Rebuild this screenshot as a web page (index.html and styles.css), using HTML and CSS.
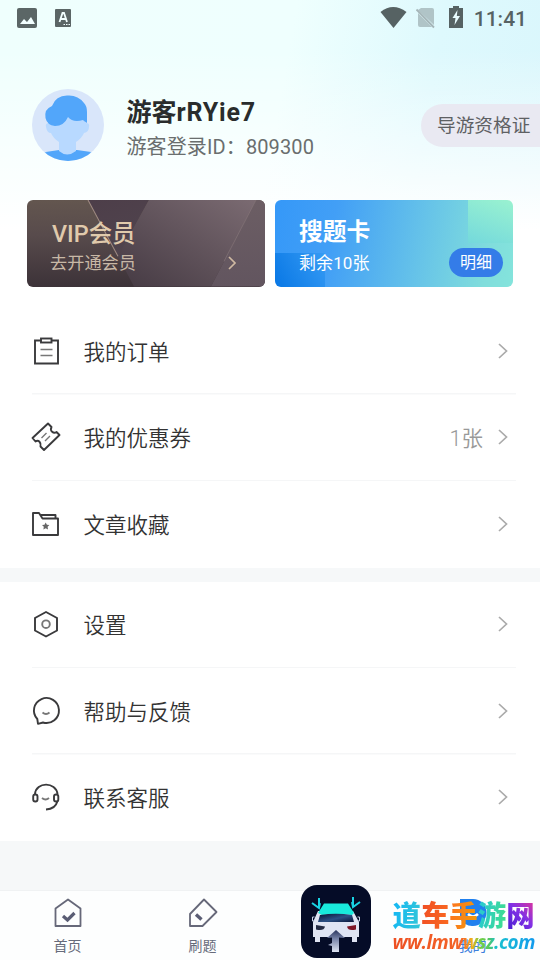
FILE: index.html
```html
<!DOCTYPE html>
<html lang="zh-CN">
<head>
<meta charset="utf-8">
<title>我的</title>
<link rel="stylesheet" href="styles.css">
</head>
<body>
<div class="screen">
  <header class="hero">
    <div class="status">
      <svg width="60" height="24" viewBox="0 0 60 24">
        <rect x="0" y="1" width="20" height="20" rx="2" fill="#5b6666"/>
        <path d="M3 17l4-5 3 3 4-5 4 7z" fill="#f2ffff"/>
        <rect x="38" y="2" width="16" height="18" rx="1" fill="#5b6666"/>
        <path d="M42.500 15l3-9h1.500l3 9M43.500 12h5" fill="none" stroke="#f2ffff" stroke-width="1.800"/>
        <path d="M46.500 17.500h1.500M49 17.500h1.500M51.500 17.500h1.500" stroke="#f2ffff" stroke-width="1.200"/>
      </svg>
      <div class="status-right">
        <svg width="84" height="24" viewBox="0 0 84 24">
          <path d="M0.500 5Q13 -5 26.500 5L13.500 21z" fill="#566263"/>
          <path d="M41 1h11q2 0 2 2v15L38 3zM38 6l14 14H40q-2 0-2-2z" fill="#b0c4c7"/>
          <path d="M36.500 2.500l17.500 18" stroke="#a5b5b8" stroke-width="1.800"/>
          <path d="M69 1h4V-1h6v2h4v20H69z" fill="#566263"/>
          <path d="M77.500 3l-5 8h3l-1 7 5.500-9h-3.200z" fill="#e9fcff"/>
        </svg>
        <span class="clock">11:41</span>
      </div>
    </div>
    <div class="profile">
      <svg class="avatar" viewBox="0 0 72 72">
        <defs><clipPath id="disc"><circle cx="36" cy="36" r="36"/></clipPath></defs>
        <g clip-path="url(#disc)">
          <rect width="72" height="72" fill="#d9e6fa"/>
          <path d="M10 64q9-2 17-3h18q9 1 17 3v10H10z" fill="#52a6fa"/>
          <path d="M17 34q-4 0-3 4 1 6 5 6 2 5 8 9v9q8 7 17 0v-9q6-4 8-9 5-1 5-6 1-4-3-4L50 25H19z" fill="#b8d9ff"/>
          <path d="M13.500 29Q12 20 20 17 24 6 36 6.500 46 6 52 14q3 3 3 9v11l-3-2-1-1q-10 3-15-3-4 9-13 9-8-1-9.500-8z" fill="#52a6fa"/>
        </g>
      </svg>
      <div class="who">
        <div class="name">游客<span class="latin">rRYie7</span></div>
        <div class="uid">游客登录ID：809300</div>
      </div>
      <div class="cert">导游资格证</div>
    </div>
    <div class="cards">
      <section class="card vip">
        <svg class="facets" viewBox="0 0 238 86" preserveAspectRatio="none">
          <defs>
            <linearGradient id="f1" x1="0" y1="0" x2=".4" y2="1"><stop stop-color="#4d3e49"/><stop offset="1" stop-color="#50444e"/></linearGradient>
            <linearGradient id="f2" x1="1" y1="0" x2="0" y2="1"><stop stop-color="#7b6b72"/><stop offset="1" stop-color="#453a43"/></linearGradient>
            <linearGradient id="f3" x1="0" y1="0" x2="0" y2="1"><stop stop-color="#6c5e64"/><stop offset="1" stop-color="#62555f"/></linearGradient>
          </defs>
          <path d="M61 0h61L91 56z" fill="url(#f1)"/>
          <path d="M122 0h107l-45 86H107L91 56z" fill="url(#f2)"/>
          <path d="M229 0h9v86h-54z" fill="url(#f3)"/>
          <path d="M61 0l30 56" stroke="#a18c83" fill="none"/>
          <path d="M229 0l-32 61" stroke="#86777b" stroke-width=".7" fill="none"/>
        </svg>
        <div class="card-body">
          <div class="vip-title">VIP会员</div>
          <div class="vip-sub">去开通会员</div>
        </div>
        <svg class="vip-arrow" viewBox="0 0 8 14"><path d="M1 1l6 6-6 6" fill="none" stroke="#cfb9a2" stroke-width="1.700"/></svg>
      </section>
      <section class="card search">
        <div class="card-body">
          <div class="search-title">搜题卡</div>
          <div class="search-sub">剩余10张</div>
        </div>
        <div class="detail">明细</div>
      </section>
    </div>
  </header>

  <main>
    <div class="group first">
      <div class="row">
        <svg class="icon" viewBox="0 0 30 30"><g fill="none" stroke="#3a3a3c" stroke-width="1.900"><path d="M10 4.500H4v23h23v-23h-6"/><rect x="10" y="2.500" width="10.500" height="4"/><path d="M9.500 13.500h12M9.500 19.500h12" stroke="#777" stroke-width="1.400"/></g></svg>
        <span class="label">我的订单</span>
        <svg class="arrow" viewBox="0 0 10 16"><path d="M1 1l7.500 7L1 15"/></svg>
      </div>
      <div class="row">
        <svg class="icon" viewBox="0 0 30 30"><g fill="none" stroke="#3a3a3c" stroke-width="1.900" stroke-linejoin="round"><path d="M1.500 16L17 1.500l3.500 3.500c-2 4 2 7 5 5l3 3L13 28l-3.500-3.500c1-4-2-7-5-5z"/><path d="M10.500 16l5-5M14 19l5-5" stroke="#777" stroke-width="1.400"/></g></svg>
        <span class="label">我的优惠券</span>
        <span class="count">1张</span>
        <svg class="arrow" viewBox="0 0 10 16"><path d="M1 1l7.500 7L1 15"/></svg>
      </div>
      <div class="row">
        <svg class="icon" viewBox="0 0 30 30"><g fill="none" stroke="#3a3a3c" stroke-width="1.900" stroke-linejoin="round"><path d="M2 4h6l3.500 5.500H27V26H2zM10 6h14.500v3.500"/></g><path d="M14.700 13.500l1.200 2.200 2.500.3-1.800 1.800.4 2.600-2.300-1.200-2.300 1.200.4-2.600-1.800-1.800 2.500-.3z" fill="#666"/></svg>
        <span class="label">文章收藏</span>
        <svg class="arrow" viewBox="0 0 10 16"><path d="M1 1l7.500 7L1 15"/></svg>
      </div>
    </div>
    <div class="group">
      <div class="row">
        <svg class="icon" viewBox="0 0 30 30"><g fill="none" stroke="#3a3a3c" stroke-width="1.900"><path d="M15 3l11 6v12.500l-11 6-11-6V9z"/><circle cx="15" cy="15.200" r="3.800" stroke="#777"/></g></svg>
        <span class="label">设置</span>
        <svg class="arrow" viewBox="0 0 10 16"><path d="M1 1l7.500 7L1 15"/></svg>
      </div>
      <div class="row">
        <svg class="icon" viewBox="0 0 30 30"><g fill="none" stroke="#3a3a3c" stroke-width="1.900" stroke-linejoin="round"><path d="M7 27.800L6.300 23A12.500 12.500 0 1 1 12 26.500z"/><path d="M11.500 16.500q3.500 3 7 0" stroke="#777"/></g></svg>
        <span class="label">帮助与反馈</span>
        <svg class="arrow" viewBox="0 0 10 16"><path d="M1 1l7.500 7L1 15"/></svg>
      </div>
      <div class="row">
        <svg class="icon" viewBox="0 0 30 30"><g fill="none" stroke="#3a3a3c" stroke-width="1.900"><path d="M4 12C5 -.500 25 -.500 26.500 12M26.500 19q-2 8-11.500 8.500"/><rect x="2.200" y="12.500" width="4.300" height="7" rx="2"/><rect x="23" y="12.500" width="4.300" height="7" rx="2"/><path d="M11 16q3.500 3 7 0" stroke="#777"/></g></svg>
        <span class="label">联系客服</span>
        <svg class="arrow" viewBox="0 0 10 16"><path d="M1 1l7.500 7L1 15"/></svg>
      </div>
    </div>
  </main>

  <nav class="tabs">
    <div class="tab">
      <svg viewBox="0 0 30 30"><path d="M15 1.500l12.500 9V28H2.500V10.500z" fill="none" stroke="#666879" stroke-width="1.800" stroke-linejoin="round"/><path d="M10 18l4.500 4 7-7" fill="none" stroke="#5a5d74" stroke-width="3.200"/></svg>
      <span>首页</span>
    </div>
    <div class="tab">
      <svg viewBox="0 0 30 30"><path d="M16 1.500L28.500 14 14.500 28H2V16z" fill="none" stroke="#666879" stroke-width="1.800" stroke-linejoin="round"/><path d="M8 16.500l5.500 5" fill="none" stroke="#5a5d74" stroke-width="3.400"/></svg>
      <span>刷题</span>
    </div>
    <div class="tab"></div>
    <div class="tab active">
      <svg viewBox="0 0 30 30"><path d="M2 1h13a13 13 0 0 1 0 27A13 13 0 0 1 2 20z" fill="#2080ee"/><path d="M10 16q5 5 10 0" fill="none" stroke="#fff" stroke-width="2.500"/></svg>
      <span>我的</span>
    </div>
  </nav>

  <div class="watermark">
    <svg class="wm-logo" viewBox="0 0 70 73">
      <defs>
        <linearGradient id="glass" x2="1" y2="1"><stop stop-color="#071230"/><stop offset=".55" stop-color="#2b4f84"/><stop offset="1" stop-color="#0a1538"/></linearGradient>
        <linearGradient id="jack" x1="0" y1="0" x2="0" y2="1"><stop stop-color="#27325c"/><stop offset=".4" stop-color="#7783a8"/><stop offset="1" stop-color="#dfe5f4"/></linearGradient>
      </defs>
      <rect width="70" height="73" rx="16" fill="#050c27"/>
      <path d="M17 26h35l6 11v15h-2v5h-5v-5H19v5h-5v-5h-2V37z" fill="#dfe4f3"/>
      <path d="M23 18.500h24l6 9.500-2 2q-16-2-30 0l-4-2z" fill="#19eadc"/>
      <path d="M19 30q16-2.500 32 0l2 7H17z" fill="url(#glass)"/>
      <path d="M13.500 32h-2v4h2M56.500 32h2v4h-2" stroke="#cbd4ea" fill="none"/>
      <path d="M15 40l9 1.500q-1 5-9 3z" fill="#242b44"/><path d="M55 40l-9 1.500q1 5 9 3z" fill="#7e1627"/>
      <path d="M35 45l9 8-6-.5V67h-7v-6l-4-1 4-2v-5.500l-5 .5z" fill="url(#jack)"/>
      <path d="M18 13v10M11 18l7 5 1-5M52 12v10M59 17l-7 5-1-5" stroke="#19d3e4" stroke-width="2" fill="none"/>
    </svg>
    <div class="wm-text">
      <div class="wm-name"><span class="c1">道</span><span class="c2">车</span><span class="c3">手</span><span class="c4">游</span><span class="c5">网</span></div>
      <div class="wm-url">ww.lmwwsz.com</div>
    </div>
  </div>
</div>
</body>
</html>
```
FILE: styles.css
```css
* { box-sizing: border-box; }
body { margin: 0; font-family: Roboto, "Noto Sans CJK SC", sans-serif; color: #333; }
svg { display: block; flex: none; overflow: visible; }
.screen { position: relative; width: 540px; height: 960px; overflow: hidden; display: flex; flex-direction: column; background: #f6f8f9; }

.hero {
  height: 308px; flex: none;
  background:
    linear-gradient(180deg, rgba(255,255,255,0) 50px, #fff 230px),
    linear-gradient(100deg, #effffd 0, #effffe 50%, #def9fd 75%, #d9f6fc 100%);
}
.status { height: 36px; padding: 7px 13px 0 17px; display: flex; justify-content: space-between; }
.status-right { display: flex; gap: 10px; }
.clock { font-size: 21px; line-height: 24px; font-weight: 500; color: #566263; }
.profile { display: flex; padding: 53px 0 0 32px; height: 164px; }
.avatar { width: 72px; height: 72px; }
.who { margin-left: 22.500px; flex: 1; white-space: nowrap; }
.name { font-size: 25px; font-weight: 700; line-height: 36px; margin-top: 6px; color: #292c2c; }
.latin { letter-spacing: .8px; }
.uid { font-size: 20px; line-height: 30px; margin-top: 1px; color: #6a6e6e; letter-spacing: .12px; }
.cert { width: 119px; height: 43px; margin-top: 15px; padding: 1px 0 0 16px; border-radius: 22px 0 0 22px; background: #e9e9f2; color: #5e6063; font-size: 18.700px; line-height: 43px; white-space: nowrap; }

.cards { display: flex; gap: 10px; padding: 0 27px; }
.card { position: relative; width: 238px; height: 86.500px; border-radius: 6px; overflow: hidden; }
.vip { background: linear-gradient(180deg, #63564f 0, #584b4c 40%, #3c3238 100%); }
.facets { position: absolute; inset: 0; width: 100%; height: 100%; }
.card-body { position: relative; padding: 18px 0 0 23px; }
.vip-title { font-size: 23.400px; line-height: 32px; font-weight: 500; color: #e0caac; padding-left: 2px; }
.vip-sub { font-size: 17.200px; line-height: 26px; color: #c8b8a6; }
.vip-arrow { position: absolute; right: 29px; top: 56px; width: 8px; height: 14px; }
.search {
  background:
    linear-gradient(20deg, #74d9dc, #9af2d0) 193px 0 / 45px 43px no-repeat,
    linear-gradient(60deg, #0877e5, #369bf4) 0 53px / 50px 34px no-repeat,
    linear-gradient(100deg, #3598f8 0, #429ff6 25%, #65c2e9 60%, #80dddc 88%, #84e4dc 100%);
}
.search .card-body { padding: 17px 0 0 24px; }
.search-title { font-size: 23.800px; line-height: 30px; font-weight: 700; color: #fff; }
.search-sub { font-size: 17px; line-height: 26px; margin-top: 3px; color: #fff; letter-spacing: .1px; }
.detail { position: absolute; right: 10px; bottom: 9.500px; width: 54px; height: 29px; border-radius: 15px; background: #347ce8; color: #fff; font-size: 16px; line-height: 29px; text-align: center; }

.group { background: #fff; margin-bottom: 14px; }
.row { height: 86.500px; padding: 0 32.500px 1px 31px; display: flex; align-items: center; background: linear-gradient(#f5f6f7, #f5f6f7) 32px 100% / 484px 1.500px no-repeat; }
.row:last-child { background: none; }
.icon { width: 30px; height: 30px; margin-right: 22.500px; }
.label { flex: 1; font-size: 21.500px; line-height: 32px; padding-top: 4px; color: #333; font-weight: 350; }
.count { font-size: 21.500px; line-height: 32px; color: #999; margin-right: 14.500px; padding-top: 4px; font-weight: 350; }
.arrow { width: 10px; height: 16px; fill: none; stroke: #aaa; stroke-width: 1.700; }

.tabs { position: absolute; left: 0; right: 0; bottom: 0; height: 70px; display: flex; background: #fdfefe; border-top: 1px solid #f0f2f3; }
.tab { width: 135px; padding: 7px 0 0; display: flex; flex-direction: column; align-items: center; font-size: 14px; line-height: 20px; color: #666b7b; }
.tab svg { width: 30px; height: 30px; margin-bottom: 8px; }
.tab.active { color: #3c80dd; }

.watermark { position: absolute; left: 301px; top: 885px; display: flex; }
.wm-logo { width: 70px; height: 73px; }
.wm-text { margin: 13px 0 0 21.500px; white-space: nowrap; }
.wm-name { font-size: 28.400px; line-height: 38px; font-weight: 900; display: flex; }
.wm-name span, .wm-url { background-clip: text; -webkit-background-clip: text; color: transparent; }
.c1 { background-image: linear-gradient(100deg, #13b7f5, #35c7d5); }
.c2 { background-image: linear-gradient(100deg, #f04d24, #fa6b20); }
.c3 { background-image: linear-gradient(100deg, #ff7120, #ef9e0a); }
.c4 { background-image: linear-gradient(100deg, #26c7d8, #42df88); }
.c5 { background-image: linear-gradient(45deg, #5120d4 20%, #8130e5 55%, #ee358f); }
.wm-url { width: 143px; font-family: "Open Sans", sans-serif; font-size: 19px; font-style: italic; font-weight: 700; line-height: 20px; margin-top: -4px; letter-spacing: -.48px; background-image: linear-gradient(90deg, #ed5023 0, #f36427 48%, #f1ad1b 55%, #75d041 61%, #55c761 67%, #17c1cf 72%, #1299ee 100%); }
```
